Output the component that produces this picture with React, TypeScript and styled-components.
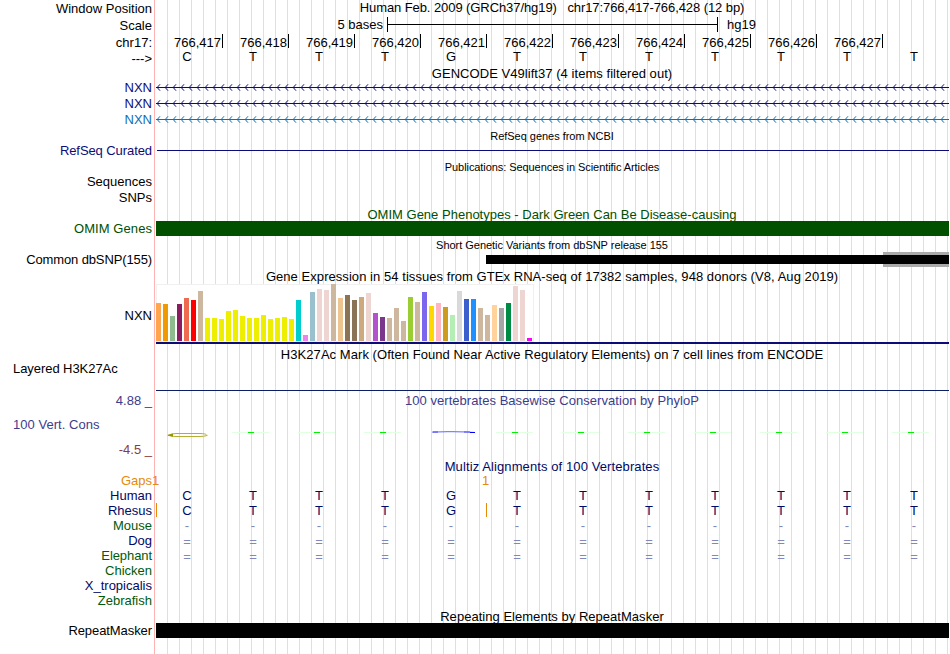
import React from "react";
import styled, { createGlobalStyle } from "styled-components";

const NAVY = "#0c0c78";
const BLUE = "#0f6eb4";
const GREEN = "#005000";
const ALIGN = "#000a64";
const SPECIES_GREEN = "#005a0a";
const ORANGE = "#e68a0a";

const GlobalStyle = createGlobalStyle`
  body { margin: 0; background: #fff; }
`;

const Browser = styled.main`
  width: 949px;
  height: 654px;
  overflow: hidden;
  font: 13px "Liberation Sans", Arial, sans-serif;
  color: #000;
  white-space: pre;
  background:
    linear-gradient(#ffb4b4, #ffb4b4) 154px 0 / 1px 100% no-repeat,
    repeating-linear-gradient(90deg, #dcdcf8 0 1px, transparent 1px 12px) 167px 0 / 782px 100% no-repeat,
    #fff;
`;

const Row = styled.section<{ $h: number }>`
  display: grid;
  grid-template-columns: 152px 793px;
  column-gap: 4px;
  height: ${(p) => p.$h}px;
`;

const Label = styled.div<{ $lh: number; $color?: string; $sp?: number; $left?: boolean }>`
  grid-area: 1 / 1;
  line-height: ${(p) => p.$lh}px;
  height: 0;
  text-align: ${(p) => (p.$left ? "left" : "right")};
  padding-left: ${(p) => (p.$left ? 13 : 0)}px;
  color: ${(p) => p.$color ?? "#000"};
  letter-spacing: ${(p) => p.$sp ?? 0}px;
`;

const Title = styled.h2<{ $lh: number; $color?: string; $small?: boolean; $sp?: number }>`
  grid-area: 1 / 2;
  margin: 0 1px 0 0;
  height: 0;
  text-align: center;
  font-weight: normal;
  font-size: ${(p) => (p.$small ? 11 : 13)}px;
  line-height: ${(p) => p.$lh}px;
  color: ${(p) => p.$color ?? "#000"};
  letter-spacing: ${(p) => p.$sp ?? 0}px;
`;

const Lane = styled.div`
  grid-area: 1 / 2;
  display: flex;
  align-items: flex-start;
  height: 100%;
`;

const Band = styled.div<{ $color: string; $h: number; $top?: number; $left?: number }>`
  flex: 1;
  height: ${(p) => p.$h}px;
  margin-top: ${(p) => p.$top ?? 0}px;
  margin-left: ${(p) => p.$left ?? 0}px;
  background: ${(p) => p.$color};
`;

const ScaleText = styled.span<{ $w?: number }>`
  width: ${(p) => (p.$w ? `${p.$w}px` : "auto")};
  text-align: right;
  line-height: 16px;
`;

const ScaleBar = styled.div`
  box-sizing: border-box;
  width: 331px;
  height: 15px;
  margin: 0 9px 0 4px;
  border: solid #000;
  border-width: 0 1px;
  background: linear-gradient(#000, #000) 0 7px / 100% 1px no-repeat;
`;

const Coordinate = styled.div`
  box-sizing: border-box;
  flex: none;
  width: 66px;
  height: 14px;
  padding-right: 1px;
  border-right: 1px solid #000;
  text-align: right;
  line-height: 17px;
`;

const Coordinates = styled(Lane)`
  padding-left: 1px;
`;

const Bases = styled.div<{ $lh: number; $color?: string }>`
  grid-area: 1 / 2;
  display: grid;
  grid-template-columns: repeat(11, 66px) 68px;
  margin-left: -2px;
  height: 0;
  text-align: center;
  line-height: ${(p) => p.$lh}px;
  color: ${(p) => p.$color ?? "#000"};
`;

const Stack = styled.div`
  grid-area: 1 / 2;
  display: grid;
  grid-template-columns: 793px;
  height: 15px;
  && > * { grid-area: 1 / 1; }
`;

const Inserts = styled.div`
  grid-area: 1 / 2;
  display: grid;
  grid-template-columns: 330px 1fr;
  line-height: 16px;
  color: ${ORANGE};
`;

const InsertCount = styled.span`
  margin-left: -4px;
`;

const InsertTick = styled.i`
  width: 1px;
  height: 14px;
  background: ${ORANGE};
`;

const Drawing = styled.svg`
  grid-area: 1 / 2;
  display: block;
  overflow: visible;
`;

const Expression = styled.div`
  grid-area: 1 / 2;
  box-sizing: border-box;
  display: flex;
  align-items: flex-end;
  gap: 2px;
  width: 378px;
  height: 58px;
  background: #fff;
  box-shadow: inset 0 0 0 1px #f0f0f0;
`;

const TissueBar = styled.i<{ $h: number; $color: string }>`
  width: 5px;
  height: ${(p) => p.$h}px;
  margin-bottom: 1px;
  background: ${(p) => p.$color};
`;

const tissues: [string, number][] = [
  ["#ffa54f", 38], ["#ee9a00", 37], ["#8fbc8f", 25], ["#8b1c62", 37], ["#ee6a50", 43], ["#ff0000", 41],
  ["#cdb79e", 50], ["#eeee00", 23], ["#eeee00", 23], ["#eeee00", 22], ["#eeee00", 30], ["#eeee00", 31],
  ["#eeee00", 25], ["#eeee00", 23], ["#eeee00", 23], ["#eeee00", 26], ["#eeee00", 22], ["#eeee00", 23],
  ["#eeee00", 24], ["#eeee00", 22], ["#00cdcd", 41], ["#ee82ee", 6], ["#9ac0cd", 49], ["#eed5d2", 52],
  ["#eed5d2", 51], ["#cdb79e", 57], ["#eec591", 43], ["#8b7355", 46], ["#8b7355", 41], ["#cdaa7d", 44],
  ["#eed5d2", 48], ["#b452cd", 28], ["#7a378b", 24], ["#cdb79e", 23], ["#cdb79e", 33], ["#cdb79e", 20],
  ["#9acd32", 44], ["#cdb79e", 39], ["#7a67ee", 49], ["#ffd700", 35], ["#ffb6c1", 38], ["#cd9b1d", 34],
  ["#b4eeb4", 26], ["#d9d9d9", 50], ["#3a5fcd", 42], ["#1e90ff", 42], ["#cdb79e", 33], ["#cdb79e", 26],
  ["#ffd39b", 36], ["#a6a6a6", 33], ["#008b45", 38], ["#eed5d2", 55], ["#eed5d2", 51], ["#ff00ff", 3],
];

const sequence = "CTTTGTTTTTTT".split("");
const positions = Array.from({ length: 11 }, (_, i) => `766,${417 + i}`);

function BaseRow({ symbols, lh, color }: { symbols: string[]; lh: number; color?: string }) {
  return (
    <Bases $lh={lh} $color={color}>
      {symbols.map((s, i) => <span key={i}>{s}</span>)}
    </Bases>
  );
}

function GeneRow({ color }: { color: string }) {
  return (
    <Row $h={16}>
      <Label $lh={16} $color={color}>NXN</Label>
      <Drawing width="793" height="16" fill="none" stroke={color}>
        <path d="M0 7.5H793" />
        {Array.from({ length: 99 }, (_, i) => (
          <path key={i} d={`M${i * 8 + 4} 4.3L${i * 8 + 1.2} 7.5L${i * 8 + 4} 10.7`} />
        ))}
      </Drawing>
    </Row>
  );
}

function Conservation() {
  return (
    <Drawing width="793" height="50">
      <g transform="translate(0 40)">
        <path d="M12 3.3Q16 1.5 20 1.5H43Q50 1.6 50.5 2.8M12 3.3Q16 4.5 20 4.5H43Q48 4.6 51.5 3.4" fill="none" stroke="#b4af32" />
        <path d="M11 3.2L17 1.6V4.8Z" fill="#969600" />
        <path d="M276 .1Q285-.5 297-.3T312 0L319 .5" fill="none" stroke="#8282ff" strokeWidth="1.2" />
        <path d="M277 0H282M308 0H314" stroke="#4646f5" />
        <path d="M314 .5H319" stroke="#0000ff" />
        {sequence.map((base, i) => base === "T" && (
          <g key={i}>
            <path d={`M${i * 66 + 10} .5h37`} stroke="#e1ffe1" />
            <path d={`M${i * 66 + 26} .5h6`} stroke="#00f000" />
          </g>
        ))}
      </g>
    </Drawing>
  );
}

export default function App() {
  const gaps = sequence.map(() => "-");
  const unaligned = sequence.map(() => "=");
  return (
    <>
      <GlobalStyle />
      <Browser>
        <Row $h={17}>
          <Label $lh={17}>Window Position</Label>
          <Title $lh={16} $sp={-0.08}>{"Human Feb. 2009 (GRCh37/hg19)   chr17:766,417-766,428 (12 bp)"}</Title>
        </Row>
        <Row $h={17}>
          <Label $lh={18}>Scale</Label>
          <Lane>
            <ScaleText $w={227}>5 bases</ScaleText>
            <ScaleBar />
            <ScaleText>hg19</ScaleText>
          </Lane>
        </Row>
        <Row $h={16}>
          <Label $lh={17}>chr17:</Label>
          <Coordinates>
            {positions.map((p) => <Coordinate key={p}>{p}</Coordinate>)}
          </Coordinates>
        </Row>
        <Row $h={16}>
          <Label $lh={17}>{"--->"}</Label>
          <BaseRow symbols={sequence} lh={14} />
        </Row>
        <Row $h={14}>
          <Title $lh={16} $sp={0.05}>GENCODE V49lift37 (4 items filtered out)</Title>
        </Row>
        <GeneRow color={NAVY} />
        <GeneRow color={NAVY} />
        <GeneRow color={BLUE} />
        <Row $h={15}>
          <Title $lh={16} $small $sp={-0.03}>RefSeq genes from NCBI</Title>
        </Row>
        <Row $h={16}>
          <Label $lh={16} $color={NAVY} $sp={-0.08}>RefSeq Curated</Label>
          <Lane><Band $color={NAVY} $h={1} $top={7} $left={1} /></Lane>
        </Row>
        <Row $h={15}>
          <Title $lh={17} $small $sp={-0.07}>Publications: Sequences in Scientific Articles</Title>
        </Row>
        <Row $h={16}><Label $lh={16}>Sequences</Label></Row>
        <Row $h={16}><Label $lh={16}>SNPs</Label></Row>
        <Row $h={15}>
          <Title $lh={18} $color={GREEN} $sp={0.01}>OMIM Gene Phenotypes - Dark Green Can Be Disease-causing</Title>
        </Row>
        <Row $h={15}>
          <Label $lh={16} $color={GREEN} $sp={0.07}>OMIM Genes</Label>
          <Lane><Band $color={GREEN} $h={15} /></Lane>
        </Row>
        <Row $h={16}>
          <Title $lh={18} $small $sp={-0.03}>Short Genetic Variants from dbSNP release 155</Title>
        </Row>
        <Row $h={16}>
          <Label $lh={16} $sp={-0.12}>Common dbSNP(155)</Label>
          <Stack>
            <Lane><Band $color="#aaaaaa" $h={15} $left={727} /></Lane>
            <Lane><Band $color="#000" $h={9} $top={3} $left={330} /></Lane>
          </Stack>
        </Row>
        <Row $h={16}>
          <Title $lh={18} $sp={0.055}>Gene Expression in 54 tissues from GTEx RNA-seq of 17382 samples, 948 donors (V8, Aug 2019)</Title>
        </Row>
        <Row $h={58}>
          <Label $lh={64}>NXN</Label>
          <Expression>
            {tissues.map(([color, h], i) => <TissueBar key={i} $color={color} $h={h} />)}
          </Expression>
        </Row>
        <Row $h={5}>
          <Lane><Band $color={NAVY} $h={2} /></Lane>
        </Row>
        <Row $h={15}>
          <Title $lh={16} $sp={0.055}>H3K27Ac Mark (Often Found Near Active Regulatory Elements) on 7 cell lines from ENCODE</Title>
        </Row>
        <Row $h={30}>
          <Label $lh={14} $left $sp={-0.06}>Layered H3K27Ac</Label>
          <Lane><Band $color="#0c1e64" $h={1} $top={28} /></Lane>
        </Row>
        <Row $h={0}>
          <Label $lh={17} $color="#3c3c8c">4.88 _</Label>
          <Title $lh={18} $color="#3c3c8c" $sp={0.045}>100 vertebrates Basewise Conservation by PhyloP</Title>
        </Row>
        <Row $h={50}>
          <Label $lh={66} $color="#3c3c8c" $left $sp={0.04}>100 Vert. Cons</Label>
          <Conservation />
        </Row>
        <Row $h={16}>
          <Label $lh={16} $color="#8c3c3c">-4.5 _</Label>
        </Row>
        <Row $h={15}>
          <Title $lh={18} $color={ALIGN} $sp={0.1}>Multiz Alignments of 100 Vertebrates</Title>
        </Row>
        <Row $h={15}>
          <Label $lh={16} $color={ORANGE}>Gaps</Label>
          <Inserts><InsertCount>1</InsertCount><InsertCount>1</InsertCount></Inserts>
        </Row>
        <Row $h={15}>
          <Label $lh={16} $color={ALIGN}>Human</Label>
          <BaseRow symbols={sequence} lh={16} color={ALIGN} />
        </Row>
        <Row $h={15}>
          <Label $lh={16} $color={ALIGN}>Rhesus</Label>
          <Stack>
            <Inserts><InsertTick /><InsertTick /></Inserts>
            <BaseRow symbols={sequence} lh={16} color={ALIGN} />
          </Stack>
        </Row>
        <Row $h={15}>
          <Label $lh={16} $color={SPECIES_GREEN}>Mouse</Label>
          <BaseRow symbols={gaps} lh={16} color="#8287b9" />
        </Row>
        <Row $h={15}>
          <Label $lh={16} $color={ALIGN}>Dog</Label>
          <BaseRow symbols={unaligned} lh={18} color="#8287b9" />
        </Row>
        <Row $h={15}>
          <Label $lh={16} $color={SPECIES_GREEN} $sp={-0.08}>Elephant</Label>
          <BaseRow symbols={unaligned} lh={18} color="#8287b9" />
        </Row>
        <Row $h={15}><Label $lh={16} $color={SPECIES_GREEN}>Chicken</Label></Row>
        <Row $h={15}><Label $lh={16} $color={ALIGN}>X_tropicalis</Label></Row>
        <Row $h={15}><Label $lh={16} $color={SPECIES_GREEN}>Zebrafish</Label></Row>
        <Row $h={15}>
          <Title $lh={18} $sp={0.03}>Repeating Elements by RepeatMasker</Title>
        </Row>
        <Row $h={15}>
          <Label $lh={16} $sp={-0.08}>RepeatMasker</Label>
          <Lane><Band $color="#000" $h={15} /></Lane>
        </Row>
      </Browser>
    </>
  );
}
